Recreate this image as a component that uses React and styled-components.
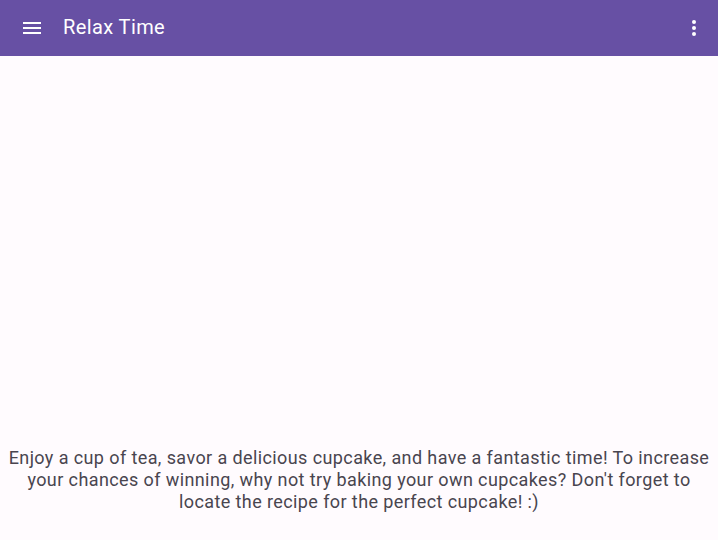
import React from 'react';
import styled, { createGlobalStyle } from 'styled-components';

const GlobalStyle = createGlobalStyle`
  html, body, #root {
    margin: 0;
    height: 100%;
  }
  body {
    background: #fffbfe;
    font-family: Roboto, "Noto Sans", sans-serif;
  }
`;

const Screen = styled.div`
  display: flex;
  flex-direction: column;
  height: 100vh;
`;

const TopBar = styled.header`
  display: flex;
  align-items: center;
  height: 56px;
  padding: 0 8px 0 16px;
  background: #6750a4;
  color: #ffffff;
  flex-shrink: 0;
`;

const IconButton = styled.button`
  display: flex;
  align-items: center;
  justify-content: center;
  width: 32px;
  height: 32px;
  padding: 0;
  border: none;
  background: none;
  color: inherit;
`;

const Title = styled.h1`
  flex: 1;
  margin: -2px 0 0 15px;
  font-size: 20px;
  font-weight: 400;
  letter-spacing: 0.4px;
`;

const Body = styled.main`
  flex: 1;
  display: flex;
  align-items: flex-end;
  justify-content: center;
  padding: 0 0 27px;
`;

const Message = styled.p`
  margin: 0;
  text-align: center;
  font-size: 18px;
  line-height: 22px;
  letter-spacing: 0.4px;
  color: #49454f;
`;

const MenuIcon = () => (
  <svg width="24" height="24" viewBox="0 0 24 24" fill="currentColor">
    <path d="M3 18h18v-2H3v2zm0-5h18v-2H3v2zm0-7v2h18V6H3z" />
  </svg>
);

const MoreIcon = () => (
  <svg width="24" height="24" viewBox="0 0 24 24" fill="currentColor">
    <circle cx="12" cy="6" r="2" />
    <circle cx="12" cy="12" r="2" />
    <circle cx="12" cy="18" r="2" />
  </svg>
);

const App = () => (
  <>
    <GlobalStyle />
    <Screen>
      <TopBar>
        <IconButton aria-label="menu">
          <MenuIcon />
        </IconButton>
        <Title>Relax Time</Title>
        <IconButton aria-label="more">
          <MoreIcon />
        </IconButton>
      </TopBar>
      <Body>
        <Message>
          Enjoy a cup of tea, savor a delicious cupcake, and have a fantastic time! To increase
          your chances of winning, why not try baking your own cupcakes? Don't forget to locate
          the recipe for the perfect cupcake! :)
        </Message>
      </Body>
    </Screen>
  </>
);

export default App;
